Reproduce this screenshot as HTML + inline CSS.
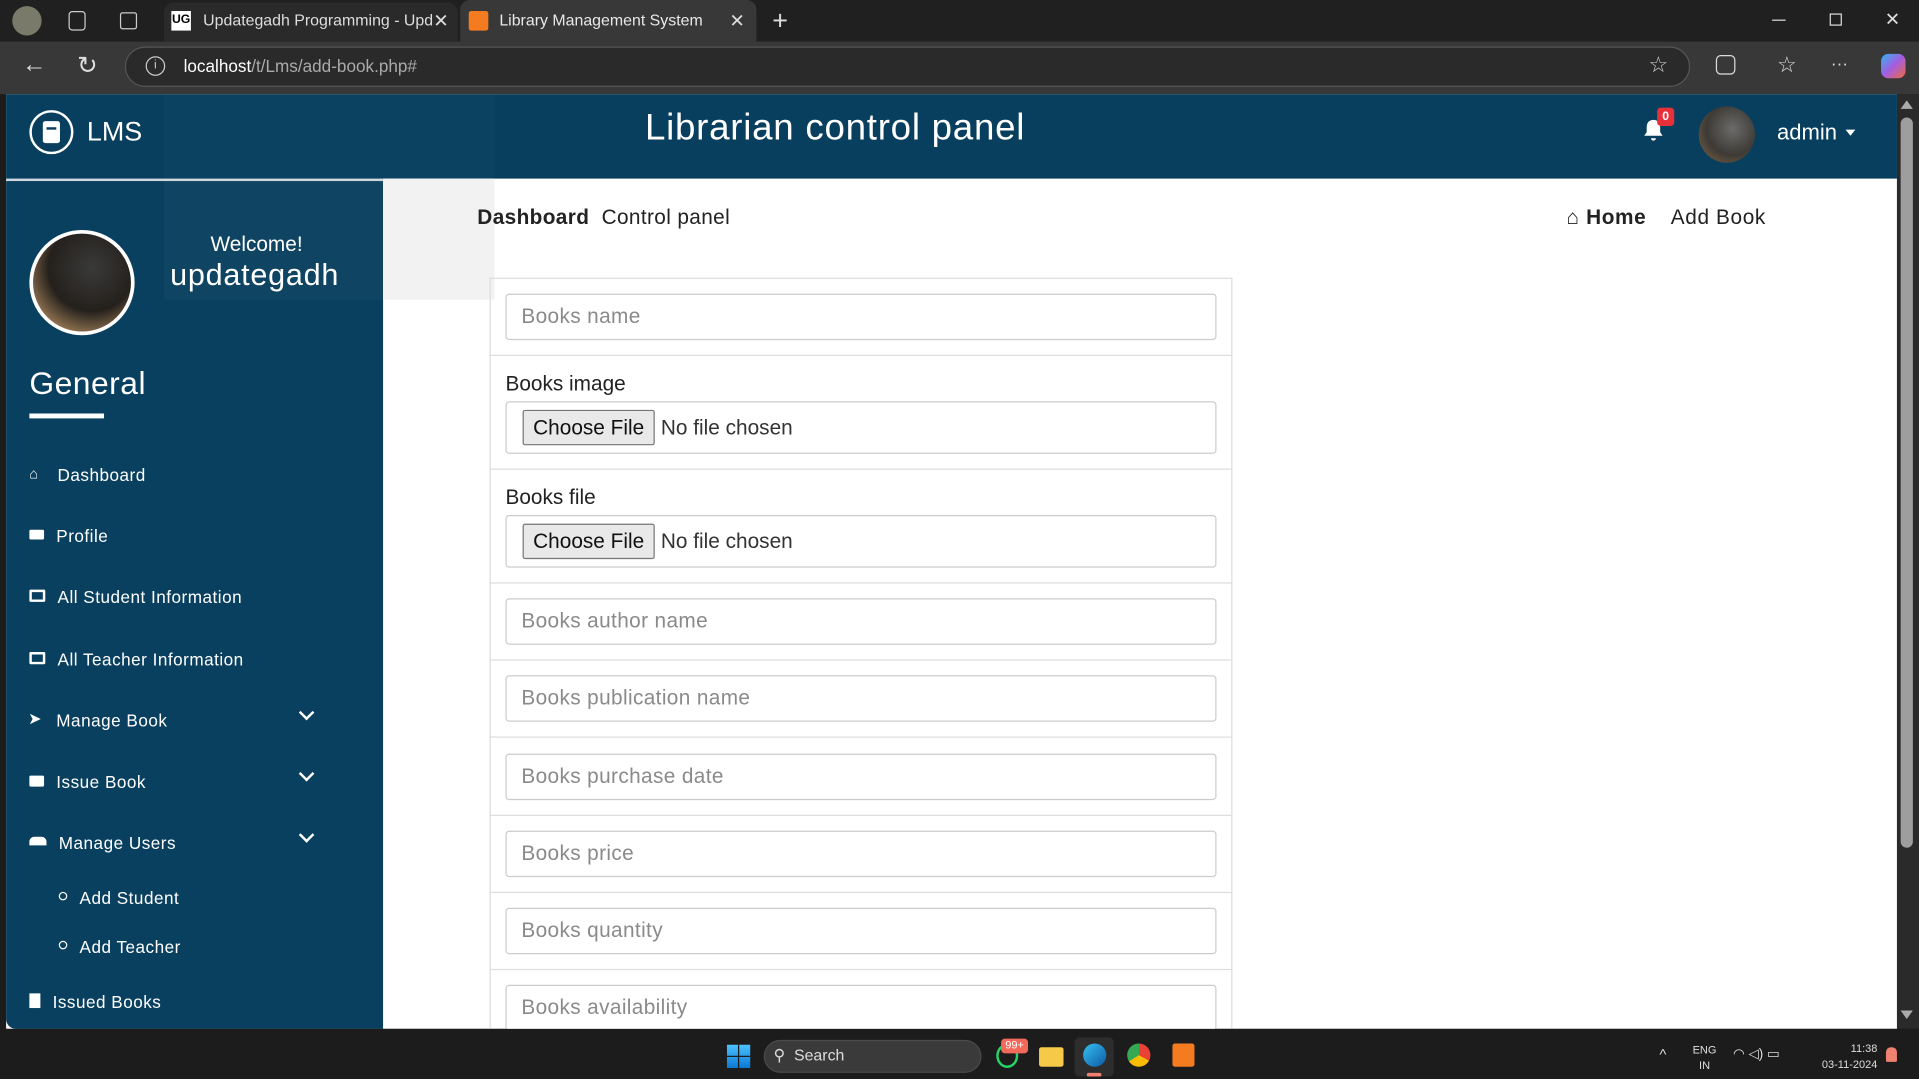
<!DOCTYPE html>
<html><head><meta charset="utf-8"><style>
*{margin:0;padding:0;box-sizing:border-box}
html,body{width:1919px;height:1079px;overflow:hidden;background:#1c1c1c;font-family:"Liberation Sans",sans-serif}
#w{position:absolute;left:0;top:0;width:1568px;height:882px;transform:scale(1.22385,1.22336);transform-origin:0 0;background:#1c1c1c}
.a{position:absolute}
.side a,.side div{position:absolute;color:#fff;font-size:14px;white-space:nowrap;letter-spacing:0.4px}
.f{position:absolute;left:413px;width:581px;height:38px;border:1px solid #ccc;border-radius:3px;background:#fff;color:#8a8a8a;font-size:17px;padding:8px 12px;letter-spacing:0.3px}
.fl{position:absolute;left:400px;width:607px;height:1px;background:#ddd}
.ff{position:absolute;left:413px;width:581px;height:43px;border:1px solid #ccc;border-radius:3px;background:#fff;font-size:17px;color:#333}
.btn{position:absolute;left:13px;top:6px;width:108px;height:29px;background:#e9e9e9;border:1px solid #767676;border-radius:2px;text-align:center;line-height:27px;color:#111}
.chev{position:absolute;left:246px;width:9px;height:9px;border-right:2.5px solid #fff;border-bottom:2.5px solid #fff;transform:rotate(45deg)}
</style></head><body><div id="w">
<div class="a" style="left:0;top:0;width:1568px;height:34px;background:#202020"></div>
<div class="a" style="left:10px;top:5px;width:24px;height:24px;border-radius:50%;background:#7a7a6a"></div>
<div class="a" style="left:56px;top:9px;width:14px;height:16px;border:1.5px solid #ccc;border-radius:3px"></div>
<div class="a" style="left:98px;top:10px;width:14px;height:14px;border:1.5px solid #ccc;border-radius:2px"></div>
<div class="a" style="left:134px;top:2px;width:240px;height:32px;background:#2a2a2a;border-radius:8px 8px 0 0"></div>
<div class="a" style="left:140px;top:9px;width:16px;height:16px;background:#fff;color:#000;font-size:10px;font-weight:bold;text-align:center;line-height:16px">UG</div>
<div class="a" style="left:166px;top:9px;color:#ddd;font-size:13px">Updategadh Programming - Upd</div>
<div class="a" style="left:354px;top:8px;color:#ddd;font-size:15px">✕</div>
<div class="a" style="left:376px;top:0;width:242px;height:34px;background:#383838;border-radius:8px 8px 0 0"></div>
<div class="a" style="left:383px;top:9px;width:16px;height:16px;background:#f47b20;border-radius:2px"></div>
<div class="a" style="left:408px;top:9px;color:#e8e8e8;font-size:13px">Library Management System</div>
<div class="a" style="left:596px;top:8px;color:#ddd;font-size:15px">✕</div>
<div class="a" style="left:631px;top:4px;color:#ddd;font-size:22px">+</div>
<div class="a" style="left:1448px;top:16px;width:11px;height:1px;background:#ddd"></div>
<div class="a" style="left:1495px;top:11px;width:10px;height:10px;border:1px solid #ddd"></div>
<div class="a" style="left:1540px;top:7px;color:#ddd;font-size:15px">✕</div>
<div class="a" style="left:0;top:34px;width:1568px;height:43px;background:#383838"></div>
<div class="a" style="left:18px;top:42px;color:#ddd;font-size:20px">←</div>
<div class="a" style="left:63px;top:41px;color:#ddd;font-size:20px">↻</div>
<div class="a" style="left:102px;top:38px;width:1279px;height:33px;background:#2a2a2a;border:1px solid #555;border-radius:17px"></div>
<div class="a" style="left:119px;top:46px;width:16px;height:16px;border:1.3px solid #ccc;border-radius:50%;color:#ccc;font-size:10px;text-align:center;line-height:14px">i</div>
<div class="a" style="left:150px;top:46px;color:#fff;font-size:14px">localhost<span style="color:#aaa">/t/Lms/add-book.php#</span></div>
<div class="a" style="left:1347px;top:43px;color:#ccc;font-size:18px">☆</div>
<div class="a" style="left:1402px;top:45px;width:16px;height:16px;border:1.5px solid #ddd;border-radius:4px"></div>
<div class="a" style="left:1452px;top:43px;color:#ddd;font-size:18px">☆</div>
<div class="a" style="left:1496px;top:44px;color:#ddd;font-size:14px">···</div>
<div class="a" style="left:1537px;top:44px;width:20px;height:20px;border-radius:6px;background:linear-gradient(135deg,#2fb5f0,#a45de0,#f06a3a)"></div>
<div class="a" style="left:5px;top:77px;width:1545px;height:764px;background:#fff"></div>
<div class="a" style="left:5px;top:77px;width:1545px;height:69px;background:#083f5e"></div>
<div class="a" style="left:5px;top:146px;width:308px;height:695px;background:#0a405f;border-radius:0 0 0 8px"></div>
<div class="a" style="left:5px;top:146px;width:308px;height:2px;background:#cfd8de"></div>
<div class="a" style="left:1550px;top:77px;width:18px;height:764px;background:#2a2a2a"></div>
<div class="a" style="left:1553px;top:96px;width:10px;height:597px;background:#9e9e9e;border-radius:5px"></div>
<div class="a" style="left:1553px;top:82px;width:0;height:0;border-left:5px solid transparent;border-right:5px solid transparent;border-bottom:7px solid #aaa"></div>
<div class="a" style="left:1553px;top:826px;width:0;height:0;border-left:5px solid transparent;border-right:5px solid transparent;border-top:7px solid #aaa"></div>
<div class="a" style="left:24px;top:90px;width:36px;height:36px;border:2px solid #fff;border-radius:50%"></div>
<div class="a" style="left:35px;top:99px;width:14px;height:18px;background:#fff;border-radius:2px"></div>
<div class="a" style="left:38px;top:104px;width:8px;height:2px;background:#083f5e"></div>
<div class="a" style="left:71px;top:95px;color:#fff;font-size:22px">LMS</div>
<div class="a" style="left:527px;top:88px;color:#fff;font-size:30px;letter-spacing:0.6px">Librarian control panel</div>
<svg class="a" style="left:1341px;top:96px" width="20" height="20" viewBox="0 0 20 20"><path d="M10 2c-3.5 0-5.5 2.5-5.5 6v4l-2 3h15l-2-3V8c0-3.5-2-6-5.5-6z M8 17h4a2 2 0 0 1-4 0z" fill="#fff"/></svg>
<div class="a" style="left:1354px;top:88px;width:14px;height:15px;background:#e8303a;border-radius:3px;color:#fff;font-size:10px;font-weight:bold;text-align:center;line-height:15px">0</div>
<div class="a" style="left:1388px;top:87px;width:46px;height:46px;border-radius:50%;background:radial-gradient(circle at 60% 40%,#6b6b6b,#3d3a35 55%,#8a6a4a)"></div>
<div class="a" style="left:1452px;top:98px;color:#fff;font-size:18px">admin</div>
<div class="a" style="left:1508px;top:106px;border-left:4px solid transparent;border-right:4px solid transparent;border-top:5px solid #fff"></div>
<div class="a" style="left:134px;top:77px;width:270px;height:69px;background:rgba(255,255,255,0.02)"></div>
<div class="a" style="left:134px;top:146px;width:179px;height:99px;background:rgba(255,255,255,0.025)"></div>
<div class="a" style="left:313px;top:146px;width:91px;height:99px;background:#f2f2f2"></div>
<div class="a" style="left:24px;top:188px;width:86px;height:86px;border:3px solid #fff;border-radius:50%;background:radial-gradient(circle at 60% 35%,#3a3a3a,#24201c 50%,#9a7a55 80%)"></div>
<div class="a" style="left:172px;top:190px;color:#fff;font-size:17px">Welcome!</div>
<div class="a" style="left:139px;top:211px;color:#fff;font-size:25px;letter-spacing:0.6px">updategadh</div>
<div class="a" style="left:24px;top:298px;color:#fff;font-size:26px;letter-spacing:0.4px">General</div>
<div class="a" style="left:24px;top:338px;width:61px;height:4px;background:#fff"></div>
<div class="side">
<div style="left:24px;top:380px;font-size:12px">⌂</div><a style="left:47px;top:380px">Dashboard</a>
<div style="left:24px;top:433px;width:12px;height:8px;background:#fff;border-radius:1px"></div><a style="left:46px;top:430px">Profile</a>
<div style="left:24px;top:482px;width:13px;height:10px;border:2px solid #fff;border-radius:1px"></div><a style="left:47px;top:480px">All Student Information</a>
<div style="left:24px;top:533px;width:13px;height:10px;border:2px solid #fff;border-radius:1px"></div><a style="left:47px;top:531px">All Teacher Information</a>
<div style="left:23px;top:580px;font-size:13px">➤</div><a style="left:46px;top:581px">Manage Book</a>
<div style="left:24px;top:634px;width:12px;height:9px;background:#fff;border-radius:1px"></div><a style="left:46px;top:631px">Issue Book</a>
<div style="left:24px;top:684px;width:14px;height:7px;background:#fff;border-radius:4px 4px 0 0"></div><a style="left:48px;top:681px">Manage Users</a>
<div style="left:48px;top:729px;width:7px;height:7px;border:1.5px solid #fff;border-radius:50%"></div><a style="left:65px;top:726px">Add Student</a>
<div style="left:48px;top:769px;width:7px;height:7px;border:1.5px solid #fff;border-radius:50%"></div><a style="left:65px;top:766px">Add Teacher</a>
<div style="left:24px;top:812px;width:9px;height:12px;background:#fff"></div><a style="left:43px;top:811px">Issued Books</a>
</div>
<div class="chev" style="top:578px"></div>
<div class="chev" style="top:628px"></div>
<div class="chev" style="top:678px"></div>
<div class="a" style="left:390px;top:168px;color:#222;font-size:17px;letter-spacing:0.3px"><b>Dashboard</b>&nbsp; Control panel</div>
<div class="a" style="left:1280px;top:168px;color:#222;font-size:17px;letter-spacing:0.5px"><b>⌂ Home</b>&nbsp;&nbsp;&nbsp; Add Book</div>
<div class="a" style="left:400px;top:227px;width:607px;height:614px;border:1px solid #ddd;border-bottom:none"></div>
<div class="f" style="top:240px">Books name</div>
<div class="fl" style="top:290px"></div>
<div class="a" style="left:413px;top:304px;color:#222;font-size:17px">Books image</div>
<div class="ff" style="top:328px"><div class="btn">Choose File</div><div class="a" style="left:126px;top:11px">No file chosen</div></div>
<div class="fl" style="top:383px"></div>
<div class="a" style="left:413px;top:397px;color:#222;font-size:17px">Books file</div>
<div class="ff" style="top:421px"><div class="btn">Choose File</div><div class="a" style="left:126px;top:11px">No file chosen</div></div>
<div class="fl" style="top:476px"></div>
<div class="f" style="top:489px">Books author name</div>
<div class="fl" style="top:539px"></div>
<div class="f" style="top:552px">Books publication name</div>
<div class="fl" style="top:602px"></div>
<div class="f" style="top:616px">Books purchase date</div>
<div class="fl" style="top:666px"></div>
<div class="f" style="top:679px">Books price</div>
<div class="fl" style="top:729px"></div>
<div class="f" style="top:742px">Books quantity</div>
<div class="fl" style="top:792px"></div>
<div class="f" style="top:805px">Books availability</div>
<div class="a" style="left:0;top:841px;width:1568px;height:41px;background:#1c1c1c"></div>
<div class="a" style="left:594px;top:854px;width:19px;height:19px;background:linear-gradient(#4cc2ff,#0a78d4)"></div>
<div class="a" style="left:603px;top:854px;width:1px;height:19px;background:#1c1c1c"></div>
<div class="a" style="left:594px;top:863px;width:19px;height:1px;background:#1c1c1c"></div>
<div class="a" style="left:624px;top:850px;width:178px;height:27px;background:#3a3a3a;border-radius:14px;border:1px solid #4a4a4a"></div>
<div class="a" style="left:632px;top:855px;color:#ddd;font-size:13px">⚲&nbsp; Search</div>
<div class="a" style="left:814px;top:853px;width:18px;height:20px;border:2px solid #25d366;border-radius:50%"></div>
<div class="a" style="left:818px;top:849px;width:22px;height:12px;background:#f0695a;border-radius:3px;color:#fff;font-size:9px;text-align:center">99+</div>
<div class="a" style="left:849px;top:856px;width:20px;height:16px;background:#f7c948;border-radius:2px"></div>
<div class="a" style="left:878px;top:848px;width:32px;height:32px;background:#2d2d2d;border-radius:4px"></div>
<div class="a" style="left:885px;top:853px;width:19px;height:19px;border-radius:50%;background:linear-gradient(135deg,#35c1f1,#0c59a4)"></div>
<div class="a" style="left:888px;top:877px;width:12px;height:3px;background:#f08070;border-radius:2px"></div>
<div class="a" style="left:921px;top:853px;width:19px;height:19px;border-radius:50%;background:conic-gradient(#ea4335 0 33%,#fbbc05 0 66%,#34a853 0)"></div>
<div class="a" style="left:958px;top:853px;width:18px;height:19px;background:#f47b20;border-radius:2px"></div>
<div class="a" style="left:1356px;top:855px;color:#ddd;font-size:12px">^</div>
<div class="a" style="left:1383px;top:852px;color:#ddd;font-size:9px;text-align:center;line-height:13px">ENG<br>IN</div>
<div class="a" style="left:1416px;top:855px;color:#ddd;font-size:11px">◠ ◁) ▭</div>
<div class="a" style="left:1482px;top:851px;color:#ddd;font-size:9px;text-align:right;line-height:13px;width:52px">11:38<br>03-11-2024</div>
<div class="a" style="left:1541px;top:856px;width:9px;height:12px;background:#f08070;border-radius:4px 4px 1px 1px"></div>
</div></body></html>
